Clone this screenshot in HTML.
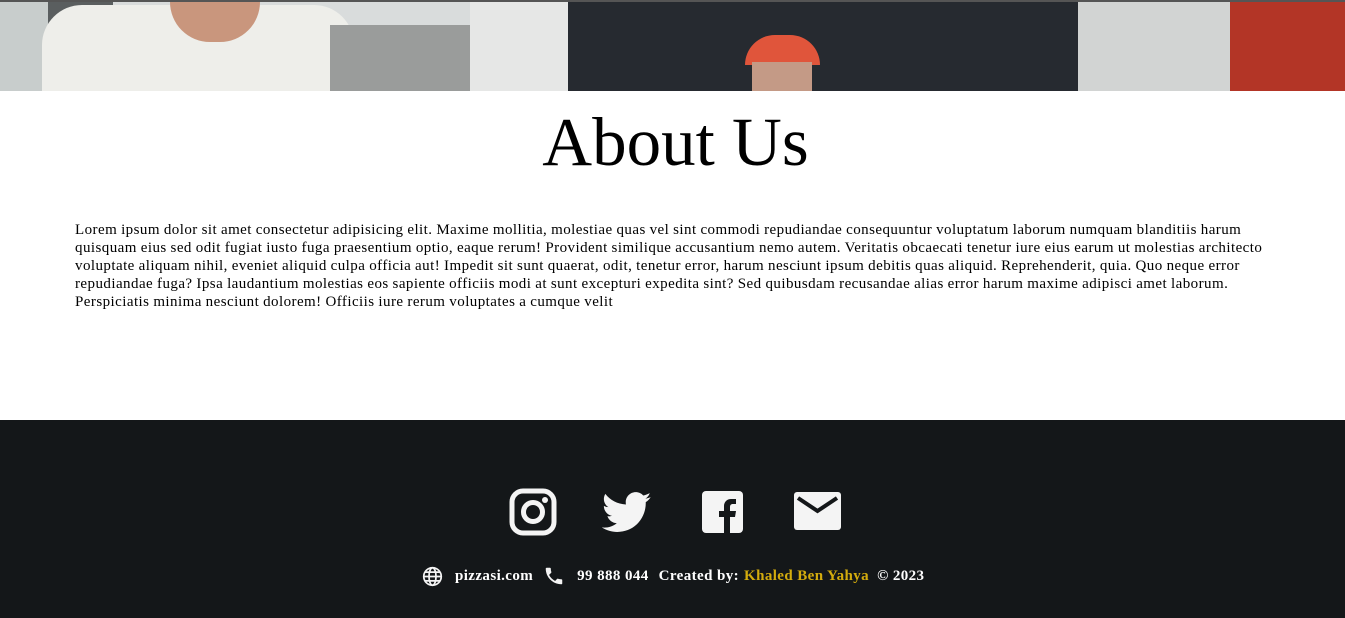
<!DOCTYPE html>
<html><head><style>
body{margin:0;width:1345px;height:618px;overflow:hidden;font-family:"Liberation Serif",serif;background:#fff;position:relative}
.hero{position:absolute;left:0;top:0;width:1345px;height:91px;background:#d9dcdc;overflow:hidden}
.hero div{position:absolute}
h1{position:absolute;top:104px;left:3px;width:1345px;margin:0;text-align:center;font-weight:normal;font-size:69px;line-height:76px}
p{position:absolute;left:75px;top:221px;width:1260px;margin:0;font-size:15px;letter-spacing:0.44px;word-spacing:-0.3px;line-height:18px;white-space:nowrap}
footer{position:absolute;left:0;top:420px;width:1345px;height:198px;background:#141719;color:#fff}
.ic{position:absolute;top:68px}
.info{position:absolute;top:145px;left:422px;font-weight:bold;font-size:15px;letter-spacing:0.4px;white-space:nowrap;display:flex;align-items:center}
</style></head><body>
<div class="hero">
<div style="left:0;top:0;width:1345px;height:2px;background:#555"></div>
<div style="left:0;top:2px;width:60px;height:89px;background:#c8cdcc"></div>
<div style="left:48px;top:2px;width:65px;height:89px;background:#5a5e5f"></div>
<div style="left:42px;top:5px;width:312px;height:86px;background:#eeeeea;border-radius:40px 40px 0 0"></div>
<div style="left:170px;top:2px;width:90px;height:40px;background:#c9967d;border-radius:0 0 40px 40px"></div>
<div style="left:330px;top:25px;width:140px;height:66px;background:#9a9c9b"></div>
<div style="left:470px;top:2px;width:100px;height:89px;background:#e6e7e6"></div>
<div style="left:568px;top:2px;width:510px;height:89px;background:#262a30"></div>
<div style="left:745px;top:35px;width:75px;height:30px;background:#e0553b;border-radius:30px 30px 0 0"></div>
<div style="left:752px;top:62px;width:60px;height:29px;background:#c49a86"></div>
<div style="left:1078px;top:2px;width:155px;height:89px;background:#d2d4d3"></div>
<div style="left:1230px;top:2px;width:115px;height:89px;background:#b33526"></div>
</div>
<h1>About Us</h1>
<p>Lorem ipsum dolor sit amet consectetur adipisicing elit. Maxime mollitia, molestiae quas vel sint commodi repudiandae consequuntur voluptatum laborum numquam blanditiis harum<br>quisquam eius sed odit fugiat iusto fuga praesentium optio, eaque rerum! Provident similique accusantium nemo autem. Veritatis obcaecati tenetur iure eius earum ut molestias architecto<br>voluptate aliquam nihil, eveniet aliquid culpa officia aut! Impedit sit sunt quaerat, odit, tenetur error, harum nesciunt ipsum debitis quas aliquid. Reprehenderit, quia. Quo neque error<br>repudiandae fuga? Ipsa laudantium molestias eos sapiente officiis modi at sunt excepturi expedita sint? Sed quibusdam recusandae alias error harum maxime adipisci amet laborum.<br>Perspiciatis minima nesciunt dolorem! Officiis iure rerum voluptates a cumque velit</p>
<footer>
<svg class="ic" style="left:509px" width="48" height="48" viewBox="0 0 48 48"><rect x="3" y="3" width="42" height="42" rx="11" fill="none" stroke="#f4f4f4" stroke-width="5"/><circle cx="24" cy="24" r="9.5" fill="none" stroke="#f4f4f4" stroke-width="5"/><circle cx="36" cy="12" r="3" fill="#f4f4f4"/></svg>
<svg class="ic" style="left:602px;top:72px" width="50" height="42" viewBox="0 0 24 20"><path fill="#f4f4f4" d="M23.6 2.3c-.9.4-1.8.6-2.8.8 1-.6 1.8-1.5 2.1-2.7-.9.6-2 1-3.1 1.2C18.9.6 17.6 0 16.2 0c-2.7 0-4.8 2.2-4.8 4.8 0 .4 0 .8.1 1.1C7.4 5.7 3.9 3.8 1.6.8c-.4.7-.7 1.6-.7 2.4 0 1.7.9 3.2 2.2 4-.8 0-1.5-.2-2.2-.6v.1c0 2.3 1.7 4.3 3.9 4.7-.4.1-.8.2-1.3.2-.3 0-.6 0-.9-.1.6 1.9 2.4 3.3 4.5 3.4-1.7 1.3-3.8 2.1-6 2.1-.4 0-.8 0-1.2-.1 2.1 1.4 4.7 2.2 7.4 2.2 8.9 0 13.7-7.4 13.7-13.7v-.6c1-.7 1.8-1.5 2.4-2.5z"/></svg>
<svg class="ic" style="left:702px;top:71px" width="41" height="42" viewBox="0 0 41 42"><rect width="41" height="42" rx="4" fill="#f4f4f4"/><path fill="#141719" d="M28 42V26h5l1-6h-6v-4c0-2 1-3 3-3h3V8h-5c-4 0-7 3-7 7v5h-5v6h5v16z"/></svg>
<svg class="ic" style="left:794px;top:72px" width="47" height="38" viewBox="0 0 47 38"><rect width="47" height="38" rx="3" fill="#f4f4f4"/><path d="M4 6l19.5 13L43 6" fill="none" stroke="#141719" stroke-width="4"/></svg>
<div class="info">
<svg width="21" height="21" viewBox="0 0 24 24" fill="none" stroke="#f4f4f4" stroke-width="2"><circle cx="12" cy="12" r="10"/><ellipse cx="12" cy="12" rx="4" ry="10"/><path d="M2 12h20M4 7h16M4 17h16"/></svg>
<span style="margin-left:12px">pizzasi.com</span>
<svg style="margin-left:10px" width="22" height="22" viewBox="0 0 24 24"><path fill="#f4f4f4" d="M6.6 10.8c1.4 2.8 3.8 5.1 6.6 6.6l2.2-2.2c.3-.3.7-.4 1-.2 1.1.4 2.3.6 3.6.6.6 0 1 .4 1 1V20c0 .6-.4 1-1 1C10.6 21 3 13.4 3 4c0-.6.4-1 1-1h3.5c.6 0 1 .4 1 1 0 1.3.2 2.5.6 3.6.1.3 0 .7-.2 1z"/></svg>
<span style="margin-left:12px">99 888 044</span>
<span style="margin-left:10px">Created by:</span>
<span style="margin-left:5px;color:#d4ac0d">Khaled Ben Yahya</span>
<span style="margin-left:8px">© 2023</span>
</div>
</footer>
</body></html>
